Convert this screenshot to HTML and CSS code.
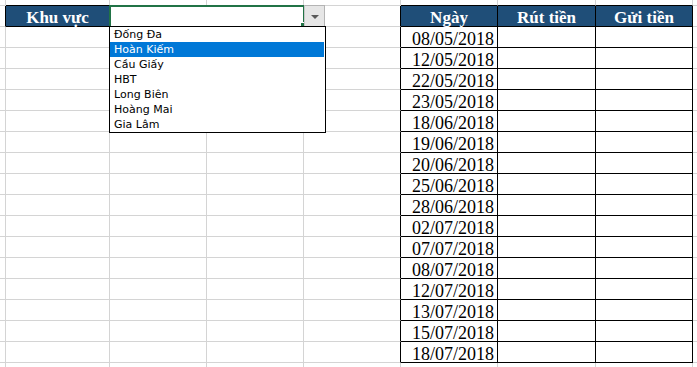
FILE: index.html
```html
<!DOCTYPE html>
<html lang="vi">
<head>
  <meta charset="UTF-8">
  <meta name="viewport" content="width=device-width, initial-scale=1.0">
  <title>Khu vực</title>
  <link rel="stylesheet" href="styles.css">
</head>
<body>
  <table class="sheet">
    <colgroup>
      <col style="width: 6px"><col style="width: 104px"><col style="width: 97px"><col style="width: 97px">
      <col style="width: 97px"><col style="width: 97px"><col style="width: 98px"><col style="width: 97px"><col style="width: 20px">
    </colgroup>
    <tr class="top"><td></td><td class="bt"></td><td></td><td></td><td></td><td class="bt"></td><td class="bt"></td><td class="bt"></td><td></td></tr>
    <tr>
      <td class="bl"></td>
      <td class="hd">Khu vực</td>
      <td class="pick" colspan="2">
        <span class="sel"></span>
        <span class="handle"></span>
        <span class="arrow"></span>
        <ul class="list">
          <li>Đống Đa</li>
          <li class="on">Hoàn Kiếm</li>
          <li>Cầu Giấy</li>
          <li>HBT</li>
          <li>Long Biên</li>
          <li>Hoàng Mai</li>
          <li>Gia Lâm</li>
        </ul>
      </td>
      <td class="bl"></td>
      <td class="hd">Ngày</td><td class="hd">Rút tiền</td><td class="hd">Gửi tiền</td>
      <td></td>
    </tr>
    <tr><td></td><td></td><td></td><td></td><td class="bl"></td><td class="d">08/05/2018</td><td class="e"></td><td class="e"></td><td></td></tr>
    <tr><td></td><td></td><td></td><td></td><td class="bl"></td><td class="d">12/05/2018</td><td class="e"></td><td class="e"></td><td></td></tr>
    <tr><td></td><td></td><td></td><td></td><td class="bl"></td><td class="d">22/05/2018</td><td class="e"></td><td class="e"></td><td></td></tr>
    <tr><td></td><td></td><td></td><td></td><td class="bl"></td><td class="d">23/05/2018</td><td class="e"></td><td class="e"></td><td></td></tr>
    <tr><td></td><td></td><td></td><td></td><td class="bl"></td><td class="d">18/06/2018</td><td class="e"></td><td class="e"></td><td></td></tr>
    <tr><td></td><td></td><td></td><td></td><td class="bl"></td><td class="d">19/06/2018</td><td class="e"></td><td class="e"></td><td></td></tr>
    <tr><td></td><td></td><td></td><td></td><td class="bl"></td><td class="d">20/06/2018</td><td class="e"></td><td class="e"></td><td></td></tr>
    <tr><td></td><td></td><td></td><td></td><td class="bl"></td><td class="d">25/06/2018</td><td class="e"></td><td class="e"></td><td></td></tr>
    <tr><td></td><td></td><td></td><td></td><td class="bl"></td><td class="d">28/06/2018</td><td class="e"></td><td class="e"></td><td></td></tr>
    <tr><td></td><td></td><td></td><td></td><td class="bl"></td><td class="d">02/07/2018</td><td class="e"></td><td class="e"></td><td></td></tr>
    <tr><td></td><td></td><td></td><td></td><td class="bl"></td><td class="d">07/07/2018</td><td class="e"></td><td class="e"></td><td></td></tr>
    <tr><td></td><td></td><td></td><td></td><td class="bl"></td><td class="d">08/07/2018</td><td class="e"></td><td class="e"></td><td></td></tr>
    <tr><td></td><td></td><td></td><td></td><td class="bl"></td><td class="d">12/07/2018</td><td class="e"></td><td class="e"></td><td></td></tr>
    <tr><td></td><td></td><td></td><td></td><td class="bl"></td><td class="d">13/07/2018</td><td class="e"></td><td class="e"></td><td></td></tr>
    <tr><td></td><td></td><td></td><td></td><td class="bl"></td><td class="d">15/07/2018</td><td class="e"></td><td class="e"></td><td></td></tr>
    <tr><td></td><td></td><td></td><td></td><td class="bl"></td><td class="d">18/07/2018</td><td class="e"></td><td class="e"></td><td></td></tr>
    <tr><td></td><td></td><td></td><td></td><td></td><td></td><td></td><td></td><td></td></tr>
  </table>
</body>
</html>
```

FILE: styles.css
```css
/* Sheet grid */
body {
  margin: 0;
  overflow: hidden;
  background: #fff;
}
.sheet {
  border-collapse: separate;
  border-spacing: 0;
  table-layout: fixed;
  width: 713px;
  font-family: "Liberation Serif", "Times New Roman", serif;
}
.sheet td {
  padding: 0;
  height: 21px;
  box-sizing: border-box;
  border-right: 1px solid #d4d4d4;
  border-bottom: 1px solid #d4d4d4;
  vertical-align: bottom;
  line-height: 16px;
  white-space: nowrap;
}
.sheet tr.top td {
  height: 6px;
}
.sheet td.bl {
  border-right-color: #000;
}
.sheet td.bt {
  border-bottom-color: #000;
}
.sheet td.hd {
  background: #1f4e78;
  color: #fff;
  font-weight: bold;
  font-size: 17px;
  text-align: center;
  border-color: #000;
}
.sheet td.d {
  text-align: right;
  padding-right: 3px;
  font-size: 18px;
  line-height: 15px;
  border-color: #000;
}
.sheet td.e {
  border-color: #000;
}

/* Selected cell with validation list */
.sheet td.pick {
  position: relative;
  border-right-color: transparent;
}
.sel {
  position: absolute;
  left: -1px;
  top: -1px;
  right: -2px;
  bottom: -2px;
  border: 2px solid #217346;
}
.handle {
  position: absolute;
  right: -2px;
  bottom: -1px;
  width: 4px;
  height: 4px;
  background: #217346;
  border: 1px solid #fff;
  border-right: 0;
  border-bottom: 0;
}
.arrow {
  position: absolute;
  left: 100%;
  margin-left: 1px;
  top: -1px;
  width: 19px;
  height: 20px;
  background: #e6e6e6;
  border: 1px solid #b4b4b4;
  border-left-color: #c8c8c8;
}
.arrow::after {
  content: "";
  position: absolute;
  left: 6px;
  top: 9px;
  border-left: 4px solid transparent;
  border-right: 4px solid transparent;
  border-top: 4px solid #595959;
}
.list {
  position: absolute;
  z-index: 2;
  left: -1px;
  top: 20px;
  width: 215px;
  margin: 0;
  padding: 0;
  list-style: none;
  background: #fff;
  border: 1px solid #000;
  font-family: "DejaVu Sans", Tahoma, sans-serif;
  font-size: 11px;
  color: #000;
}
.list li {
  height: 15px;
  line-height: 15px;
  padding-left: 4px;
  margin-right: 1px;
}
.list li.on {
  background: #0078d7;
  color: #fff;
}
```
